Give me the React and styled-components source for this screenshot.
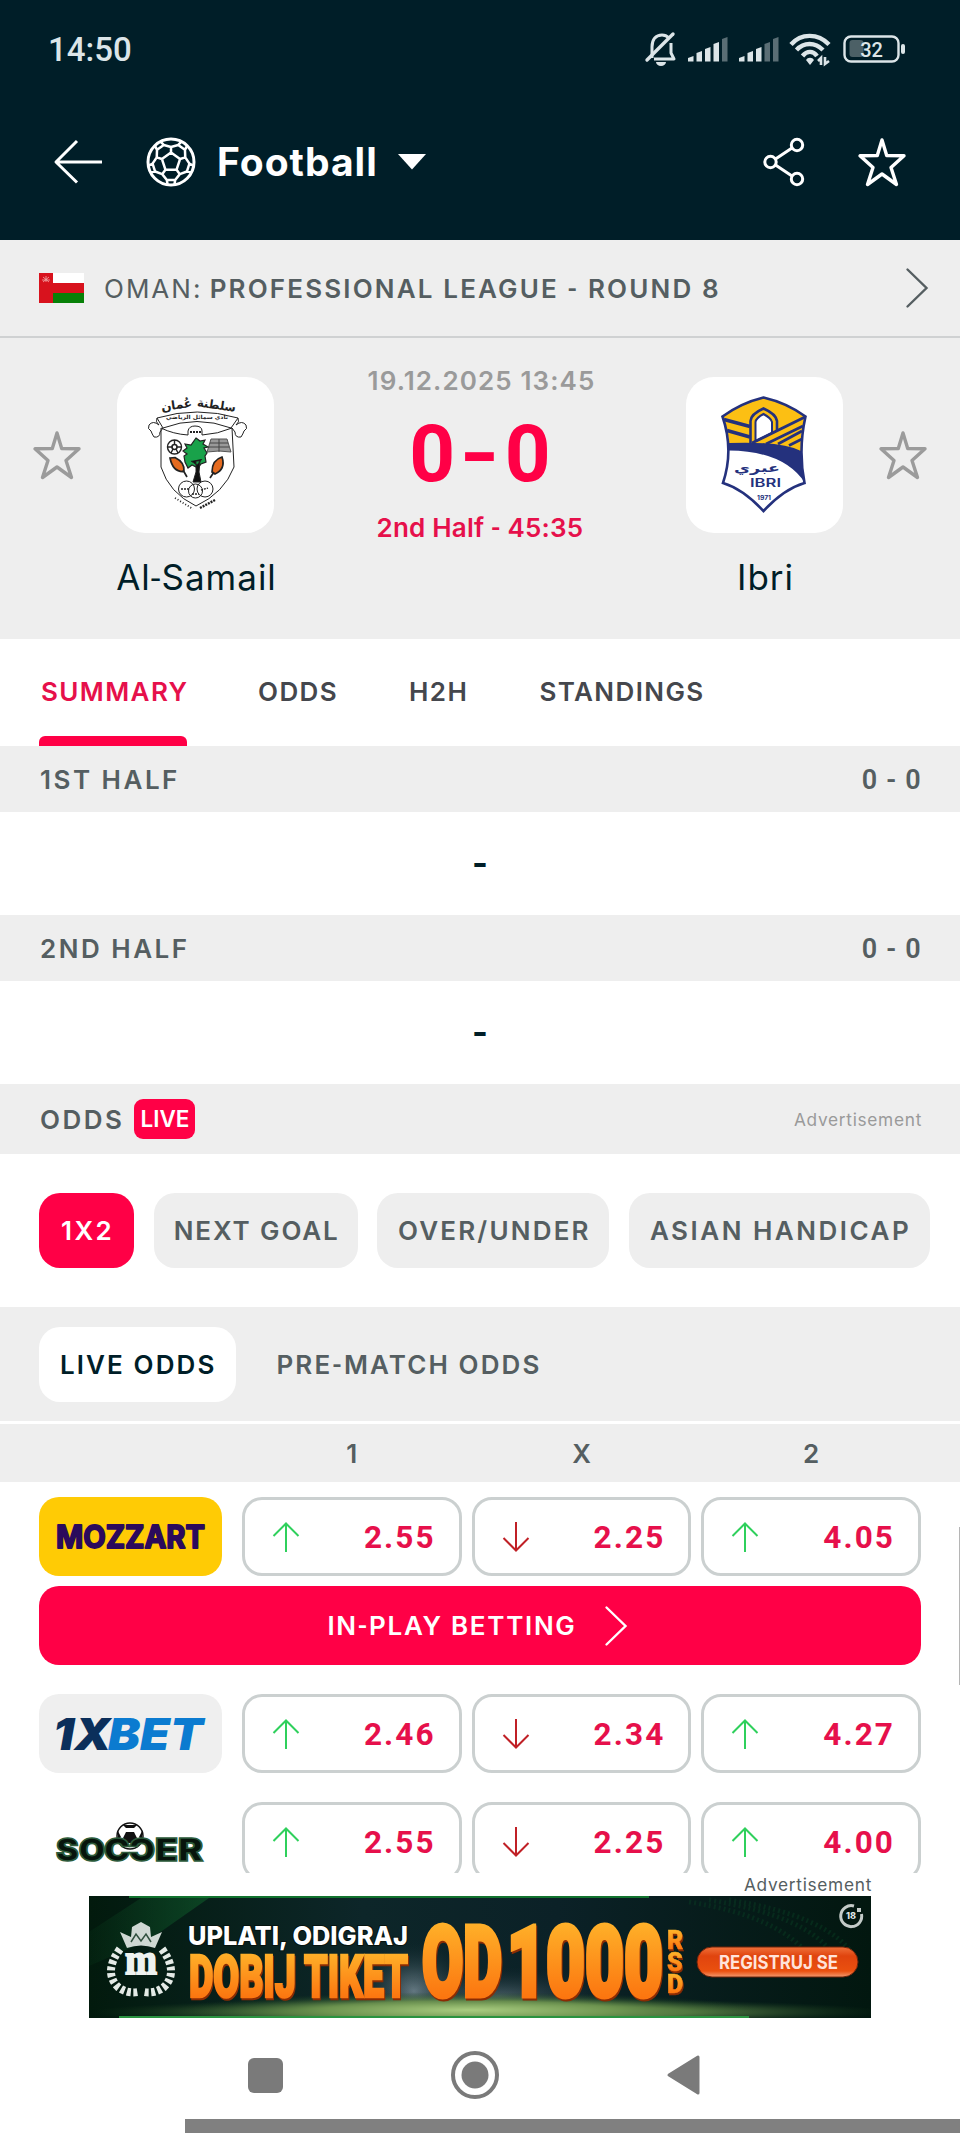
import React from "react";
import styled, { createGlobalStyle } from "styled-components";

const pills = [
  { label: "1X2", width: 95, tracking: 2.3, active: true },
  { label: "NEXT GOAL", width: 204, tracking: 1.9 },
  { label: "OVER/UNDER", width: 232, tracking: 2.2 },
  { label: "ASIAN HANDICAP", width: 301, tracking: 2.5 },
];

const tabs = [
  { label: "SUMMARY", width: 148, active: true },
  { label: "ODDS", width: 82 },
  { label: "H2H", width: 61 },
  { label: "STANDINGS", width: 168 },
];

const mozzartOdds = [
  { value: "2.55", up: true },
  { value: "2.25", up: false },
  { value: "4.05", up: true },
];
const xbetOdds = [
  { value: "2.46", up: true },
  { value: "2.34", up: false },
  { value: "4.27", up: true },
];
const soccerOdds = [
  { value: "2.55", up: true },
  { value: "2.25", up: false },
  { value: "4.00", up: true },
];

function App() {
  return (
    <Screen>
      <GlobalStyle />
      <StatusBar />
      <Header />
      <LeagueBar>
        <OmanFlag />
        <LeagueName>
          OMAN:{" "}
          <b>
            PROFESSIONAL LEAGUE <Hyphen>-</Hyphen> ROUND 8
          </b>
        </LeagueName>
        <Chevron color="#555e61" />
      </LeagueBar>
      <MatchHeader />
      <Tabs>
        {tabs.map((tab) => (
          <Tab key={tab.label} $width={tab.width} $active={tab.active}>
            <span>{tab.label}</span>
            <TabLine $active={tab.active} />
          </Tab>
        ))}
      </Tabs>
      <Half title="1ST HALF" score="0 - 0" />
      <Half title="2ND HALF" score="0 - 0" />
      <OddsHead>
        <SectionTitle>ODDS</SectionTitle>
        <LiveBadge>LIVE</LiveBadge>
        <AdNote $color="#9a9a9a">Advertisement</AdNote>
      </OddsHead>
      <PillRow>
        {pills.map((pill) => (
          <Pill key={pill.label} $width={pill.width} $tracking={pill.tracking} $active={pill.active}>
            {pill.label}
          </Pill>
        ))}
      </PillRow>
      <OddsTabs>
        <OddsTab $active>LIVE ODDS</OddsTab>
        <OddsTab>
          PRE<Hyphen>-</Hyphen>MATCH ODDS
        </OddsTab>
      </OddsTabs>
      <ColumnHead>
        <span />
        <span>1</span>
        <span>X</span>
        <span>2</span>
      </ColumnHead>
      <OddsList>
        <OddsRow logo={<MozzartLogo />} color="#ffcb05" odds={mozzartOdds} />
        <InPlayButton>
          <span>
            IN<Hyphen>-</Hyphen>PLAY BETTING
          </span>
          <Chevron color="#fff" />
        </InPlayButton>
        <OddsRow logo={<XbetLogo />} color="#efefef" odds={xbetOdds} />
        <OddsRow logo={<SoccerLogo />} color="#fff" odds={soccerOdds} />
        <ScrollThumb />
      </OddsList>
      <AdBlock>
        <AdNote $color="#555e61">Advertisement</AdNote>
        <AdBanner />
      </AdBlock>
      <NavBar />
      <BottomStrip />
    </Screen>
  );
}

const StatusBar = () => (
  <StatusRow>
    <Clock>14:50</Clock>
    <StatusIcons>
      <svg width="32" height="36" viewBox="0 0 32 36" fill="none" stroke="#dce5e8" strokeWidth="3">
        <path d="M7 27 V16 C7 8 11 4 17 4 C20 4 22 5 24 7 M26 12 V22 L29 28 H9" strokeLinejoin="round" />
        <path d="M2 29 L28 3" strokeWidth="3.4" strokeLinecap="round" />
        <path d="M11 31 a5 4 0 0 0 10 0 z" fill="#dce5e8" stroke="none" />
      </svg>
      <Signal level={4} />
      <Signal level={3} />
      <svg width="42" height="34" viewBox="0 0 42 34" fill="none" stroke="#dce5e8" strokeWidth="4.4">
        <path d="M2 12.500 C12 1 29 1 40 12.500" />
        <path d="M7.500 18 C15 10 26 10 34 18" />
        <path d="M13.500 24 C18 18.500 24 18.500 28 24" />
        <path d="M17 28 a4.500 4 0 0 1 8 0 L21 33 z" fill="#dce5e8" stroke="none" />
        <path d="M32 33 V26 L29 29 M36 25 V32 L40 29" strokeWidth="2.600" />
      </svg>
      <svg width="63" height="28" viewBox="0 0 63 28">
        <rect x="1.500" y="1.500" width="54" height="25" rx="6.500" fill="none" stroke="#dce5e8" strokeWidth="2.400" />
        <rect x="6.500" y="5" width="14" height="17" rx="3" fill="#4c6066" />
        <rect x="58" y="9" width="4" height="10" rx="2" fill="#dce5e8" />
        <text x="28.500" y="21.500" textAnchor="middle" fontFamily="Roboto, sans-serif" fontSize="20" fontWeight="500" fill="#dce5e8">
          32
        </text>
      </svg>
    </StatusIcons>
  </StatusRow>
);

const Signal = ({ level }) => (
  <svg width="39" height="26" viewBox="0 0 39 26">
    {[6, 11, 15, 20, 25].map((h, i) => (
      <path
        key={h}
        d={`M${i * 8.5} ${26 - h + 2} l5.500 -2 V25.500 h-5.500 z`}
        fill={i < level ? "#dce5e8" : "#5a6e75"}
      />
    ))}
  </svg>
);

const Header = () => (
  <HeaderRow>
    <BackIcon width="49" height="46" viewBox="0 0 49 46" fill="none" stroke="#fff" strokeWidth="3">
      <path d="M48 23 H2 M23 2 L2 23 L23 43.500" strokeLinejoin="round" />
    </BackIcon>
    <FootballIcon />
    <SportName>Football</SportName>
    <svg width="28" height="16" viewBox="0 0 28 16">
      <path d="M0 0 H28 L14 15.500 z" fill="#fff" />
    </svg>
    <HeaderActions>
      <svg width="42" height="50" viewBox="0 0 42 50" fill="none" stroke="#fff" strokeWidth="3">
        <circle cx="34" cy="8" r="5.700" />
        <circle cx="7.500" cy="25" r="5.700" />
        <circle cx="34" cy="42" r="5.700" />
        <path d="M12.500 22 L29 11 M12.500 28 L29 39" />
      </svg>
      <Star color="#fff" />
    </HeaderActions>
  </HeaderRow>
);

const polar = (radius, deg) => {
  const rad = ((deg - 90) * Math.PI) / 180;
  return `${(radius * Math.cos(rad)).toFixed(2)} ${(radius * Math.sin(rad)).toFixed(2)}`;
};

// one fifth of the ball: pentagon side, spoke, outer patch and the seam to the next patch
const ballSeams = [0, 72, 144, 216, 288]
  .map(
    (a) =>
      `M${polar(9.5, a)} L${polar(9.5, a + 72)} M${polar(9.5, a)} L${polar(15, a)} ` +
      `M${polar(22.5, a - 27)} L${polar(18.5, a - 23)} L${polar(15, a)} L${polar(18.5, a + 23)} L${polar(22.5, a + 27)} ` +
      `M${polar(18.5, a + 23)} L${polar(18.5, a + 49)}`
  )
  .join(" ");

const FootballIcon = () => (
  <svg width="50" height="50" viewBox="-25 -25 50 50" fill="none" stroke="#fff" strokeWidth="2.500">
    <circle r="23" strokeWidth="3" />
    <path d={ballSeams} strokeLinejoin="round" />
  </svg>
);

const Star = ({ color }) => (
  <svg width="48" height="49" viewBox="0 0 48 49" fill="none" stroke={color} strokeWidth="3.400">
    <path
      d="M24 2 L28.700 17.500 L46 17.800 L33 29.500 L38.500 46.500 L24 36 L9.500 46.500 L15 29.500 L2 17.800 L19.300 17.500 z"
      strokeLinejoin="round"
    />
  </svg>
);

const Chevron = ({ color }) => (
  <svg width="22" height="40" viewBox="0 0 22 40" fill="none" stroke={color} strokeWidth="2.400">
    <path d="M1.500 1.500 L20.500 20 L1.500 38.500" strokeLinecap="round" />
  </svg>
);

const OmanFlag = () => (
  <svg width="45" height="30" viewBox="0 0 45 30">
    <rect width="45" height="10" fill="#fff" />
    <rect y="10" width="45" height="10" fill="#d8121d" />
    <rect y="20" width="45" height="10" fill="#078007" />
    <rect width="14" height="30" fill="#d8121d" />
    <path d="M4 4 L10 9 M10 4 L4 9 M7 3 V9 M3 7 H11" stroke="#f3a9a9" strokeWidth="0.800" />
  </svg>
);

const MatchHeader = () => (
  <Match>
    <StarSlot>
      <Star color="#9b9b9b" />
    </StarSlot>
    <Team>
      <Crest>
        <SamailCrest />
      </Crest>
      <TeamName>
        Al<Hyphen>-</Hyphen>Samail
      </TeamName>
    </Team>
    <ScoreBlock>
      <MatchDate>19.12.2025 13:45</MatchDate>
      <Score>
        <span>0</span>
        <Dash>-</Dash>
        <span>0</span>
      </Score>
      <MatchTime>
        2nd Half <Hyphen>-</Hyphen> 45:35
      </MatchTime>
    </ScoreBlock>
    <Team>
      <Crest>
        <IbriCrest />
      </Crest>
      <TeamName>Ibri</TeamName>
    </Team>
    <StarSlot>
      <Star color="#9b9b9b" />
    </StarSlot>
  </Match>
);

const SamailCrest = () => (
  <svg width="156" height="156" viewBox="0 0 156 156" fill="none" stroke="#222" strokeWidth="1">
    <g fill="#222" stroke="none" fontFamily="DejaVu Sans, sans-serif">
      <text x="99" y="32" fontSize="12" textAnchor="middle" textLength="39" lengthAdjust="spacingAndGlyphs" transform="rotate(8 99 32)">
        سلطنة
      </text>
      <text x="60" y="32" fontSize="12" textAnchor="middle" textLength="31" lengthAdjust="spacingAndGlyphs" transform="rotate(-8 60 32)">
        عُمان
      </text>
      <text x="80" y="42" fontSize="5.500" textAnchor="middle" textLength="62" lengthAdjust="spacingAndGlyphs">
        نادي سمائل الرياضي
      </text>
    </g>
    <path d="M40 41 Q80 29 121 41 L114 51 Q80 38 46 51 z" />
    <path d="M40 41 q-2 4 2 7 q-6 -5 -10 0 q-2 4 2 6 q1 3 3 6 q6 1 6 -5 l3 -4" />
    <path d="M121 41 q2 4 -2 7 q6 -5 10 0 q2 4 -2 6 q-1 3 -3 6 q-6 1 -6 -5 l-3 -4" />
    <path d="M44 51 Q56 57 71 58 V54 Q72 49 78 49 Q85 49 85 54 V58 Q101 57 115 51" />
    <path d="M44 51 L44 90 Q52 116 79 129 Q107 116 117 90 L115 51" />
    <path d="M73 55 h11" strokeWidth="2" strokeDasharray="2 1" />
    <circle cx="57.500" cy="70" r="7" strokeWidth="1.400" />
    <circle cx="57.500" cy="70" r="2.500" strokeWidth="1.600" />
    <path d="M57.500 63 v4 M51 70 h4 M60 70 h4 M54 76 l2 -4 M61 76 l-2 -4" strokeWidth="1.400" />
    <path d="M94 62 H110 L114 75 L102 74 L90 75 z" fill="#999" stroke="#555" />
    <path d="M102 62 V75 M93 66 H111 M92 70 H112" stroke="#444" />
    <path
      d="M79 61 l4 3 5 -1 -2 4 5 3 -4 1 3 5 -2 3 1 6 -5 2 -3 4 -6 -3 -4 3 -3 -6 -1 -6 3 -2 -4 -3 4 -3 -2 -4 6 1 z"
      fill="#19a24a"
      strokeWidth="1.200"
    />
    <path d="M79 84 h4 l-1 11 2 10 h-8 l3 -10 z M74 84 l6 4 5 -6" fill="#111" />
    <path d="M53 81 l5 -.5 q10 5 9 14 q-11 1 -14 -13.500 z M66 93 l4 7" fill="#e56b20" strokeWidth="1.700" />
    <path d="M105 80 q-10 3 -10 15 l3 2 q11 -5 7 -17 z M97 95 l-4 6" fill="#e56b20" strokeWidth="1.700" />
    <circle cx="69.500" cy="112" r="8" />
    <circle cx="78.500" cy="114" r="7" />
    <circle cx="88" cy="112" r="8" />
    <path d="M64 112 h8 M75 117 h7 M84 113 l7 -2" strokeWidth="1.300" strokeDasharray="2 1" />
    <path d="M58 121 l18 11" strokeWidth="1.800" strokeDasharray="1 2" />
    <path d="M83 131 l15 -8" strokeWidth="2.400" strokeDasharray="2 1" />
  </svg>
);

const IbriCrest = () => (
  <svg width="156" height="156" viewBox="0 0 156 156">
    <path
      d="M77.500 20.500 Q101 26 119.500 39.500 Q112 73 118.500 106 Q98 112 77.500 134 Q57 112 37 106 Q48 73 36.500 39.500 Q55 26 77.500 20.500 z"
      fill="#fff"
    />
    <path d="M77.500 20.500 Q101 26 119.500 39.500 Q114 55 115 74 L43 70 Q43 54 36.500 39.500 Q55 26 77.500 20.500 z" fill="#fcbf13" />
    <path d="M43 66 Q95 64 115 74 Q115 90 119 106 Q98 74 43 73.500 z" fill="#24317d" />
    <g fill="none" stroke="#24317d" strokeWidth="2.600">
      <path d="M38 42.500 L64 49.500 M41 53.500 L64 60" strokeWidth="3.400" />
      <path d="M64.500 66 V44 Q65 37 77.500 31.500 Q90 37 91 44 V54" fill="#fcbf13" />
      <path d="M69.500 65 V45 Q70 41 77.500 37 Q85 41 86 45 V56 L70 64" fill="#fff" strokeWidth="2" />
      <path d="M119 40 L66 66 M117 49 L80 67 M116 54 L92 67 M116 62 L103 68.500" strokeWidth="2.800" />
      <path
        d="M77.500 20.500 Q101 26 119.500 39.500 Q112 73 118.500 106 Q98 112 77.500 134 Q57 112 37 106 Q48 73 36.500 39.500 Q55 26 77.500 20.500 z"
      />
    </g>
    <g fill="#24317d" fontFamily="DejaVu Sans, sans-serif">
      <text x="71" y="95" textAnchor="middle" fontSize="12" textLength="46" lengthAdjust="spacingAndGlyphs">
        عبري
      </text>
      <text x="64" y="110" fontFamily="Inter, sans-serif" fontWeight="600" fontSize="12" textLength="31" lengthAdjust="spacingAndGlyphs">
        IBRI
      </text>
      <text x="71" y="123" fontFamily="Inter, sans-serif" fontWeight="700" fontSize="6" textLength="14" lengthAdjust="spacingAndGlyphs">
        1971
      </text>
    </g>
  </svg>
);

const Half = ({ title, score }) => (
  <>
    <SectionHead>
      <SectionTitle>{title}</SectionTitle>
      <HalfScore>{score}</HalfScore>
    </SectionHead>
    <HalfBody>-</HalfBody>
  </>
);

const OddsRow = ({ logo, color, odds }) => (
  <OddsGrid>
    <LogoBox $color={color}>{logo}</LogoBox>
    {odds.map((odd, index) => (
      <OddBox key={index}>
        <Arrow up={odd.up} />
        <span>{odd.value}</span>
      </OddBox>
    ))}
  </OddsGrid>
);

const Arrow = ({ up }) => (
  <svg width="28" height="30" viewBox="0 0 28 30" fill="none" stroke={up ? "#2fd05c" : "#c02026"} strokeWidth="2">
    <path d={up ? "M14 30 V2 M1.500 14 L14 1.500 L26.500 14" : "M14 0 V28 M1.500 16 L14 28.500 L26.500 16"} />
  </svg>
);

const MozzartLogo = () => (
  <svg width="151" height="32" viewBox="0 0 151 32">
    <text x="1" y="27" fontFamily="Inter, sans-serif" fontWeight="700" fontSize="31" fill="#2b0a5c" stroke="#2b0a5c" strokeWidth="1.800" strokeLinejoin="round" textLength="149" lengthAdjust="spacingAndGlyphs">
      MOZZART
    </text>
  </svg>
);

const XbetLogo = () => (
  <svg width="151" height="36" viewBox="0 0 151 36">
    <g fontFamily="Inter, sans-serif" fontWeight="900" fontStyle="italic" fontSize="44">
      <text x="-2" y="33.500" fill="#0b2f5b" textLength="58" lengthAdjust="spacingAndGlyphs">
        1X
      </text>
      <text x="53" y="33.500" fill="#0b7bd0" textLength="95" lengthAdjust="spacingAndGlyphs">
        BET
      </text>
    </g>
  </svg>
);

const SoccerLogo = () => (
  <svg width="151" height="42" viewBox="0 0 151 42">
    <circle cx="75" cy="15" r="13" fill="#fff" stroke="#111" strokeWidth="1.500" />
    <path d="M71 11 h8 l3 6 -4 5 h-6 l-4 -5 z M68 4 h14 l-3 3 h-8 z M63 10 l3 6 -3 4 z M87 10 l-3 6 3 4 z" fill="#111" />
    <g fontFamily="Inter, sans-serif" fontWeight="900" fontSize="31" fill="#07140c" stroke="#2c5b3b" strokeWidth="1.600">
      <text x="1" y="39.500" textLength="49" lengthAdjust="spacingAndGlyphs">
        SO
      </text>
      <text x="49" y="39.500" textLength="26" lengthAdjust="spacingAndGlyphs">
        C
      </text>
      <text x="-100" y="39.500" textLength="26" lengthAdjust="spacingAndGlyphs" transform="scale(-1 1)">
        C
      </text>
      <text x="100" y="39.500" textLength="48" lengthAdjust="spacingAndGlyphs">
        ER
      </text>
    </g>
  </svg>
);

const AdBanner = () => (
  <svg width="782" height="122" viewBox="0 0 782 122">
    <defs>
      <linearGradient id="night" x1="0" x2="1">
        <stop offset="0" stopColor="#021a0d" />
        <stop offset="0.350" stopColor="#0d2629" />
        <stop offset="0.600" stopColor="#0b2127" />
        <stop offset="1" stopColor="#02170f" />
      </linearGradient>
      <radialGradient id="grass">
        <stop offset="0" stopColor="#a9cc80" />
        <stop offset="0.500" stopColor="#6f9650" stopOpacity="0.850" />
        <stop offset="1" stopColor="#173f1c" stopOpacity="0" />
      </radialGradient>
      <radialGradient id="glow">
        <stop offset="0" stopColor="#8295a0" stopOpacity="0.800" />
        <stop offset="1" stopColor="#12292f" stopOpacity="0" />
      </radialGradient>
      <linearGradient id="gold" x1="0" y1="0" x2="0" y2="1">
        <stop offset="0.100" stopColor="#ffb62b" />
        <stop offset="0.900" stopColor="#fb6d0c" />
      </linearGradient>
      <linearGradient id="beam" x1="0" x2="1">
        <stop offset="0" stopColor="#0b4a22" stopOpacity="0.200" />
        <stop offset="1" stopColor="#0e5428" />
      </linearGradient>
      <linearGradient id="button" x1="0" y1="0" x2="0" y2="1">
        <stop offset="0" stopColor="#f0713a" />
        <stop offset="0.300" stopColor="#e0440e" />
        <stop offset="0.800" stopColor="#ea500f" />
        <stop offset="1" stopColor="#f49a70" />
      </linearGradient>
      <clipPath id="bannerClip">
        <rect width="782" height="122" />
      </clipPath>
    </defs>
    <g clipPath="url(#bannerClip)">
      <rect width="782" height="122" fill="url(#night)" />
      <path d="M0 36 L52 2 H120 L60 44 L0 70 z" fill="url(#beam)" opacity="0.700" />
      <ellipse cx="325" cy="95" rx="60" ry="50" fill="url(#glow)" />
      <ellipse cx="410" cy="100" rx="120" ry="30" fill="url(#glow)" opacity="0.600" />
      <ellipse cx="400" cy="116" rx="400" ry="14" fill="url(#grass)" />
      <ellipse cx="380" cy="114" rx="290" ry="18" fill="url(#grass)" />
      <path d="M40 1 H560" stroke="#12732f" strokeWidth="2" />
      <path d="M30 121 H660" stroke="#2a9340" strokeWidth="2" />
      <path d="M600 6 Q690 20 720 60 M620 4 Q720 20 745 60 M640 4 Q740 20 765 60" stroke="#0a4425" strokeWidth="5" strokeDasharray="2 3" fill="none" opacity="0.400" />
    </g>

    <g fill="#eef2ef">
      <path d="M38 52 L31 36 L42 41 L43 31 L52 26 L61 31 L62 41 L73 36 L66 52 Q52 47 38 52 z" fill="#cfd8d3" />
      <path d="M42 46 l5 -8 5 7 5 -7 5 8" fill="none" stroke="#31503f" strokeWidth="1.500" />
      <text x="36" y="78" fontFamily="Liberation Serif, serif" fontWeight="900" fontSize="44" stroke="#eef2ef" strokeWidth="2" textLength="32" lengthAdjust="spacingAndGlyphs">
        m
      </text>
    </g>
    <path d="M31 53 Q14 76 29 91 Q38 98 49 96" fill="none" stroke="#e4eae6" strokeWidth="8" strokeDasharray="4 2.500" />
    <path d="M73 53 Q90 76 75 91 Q66 98 55 96" fill="none" stroke="#e4eae6" strokeWidth="8" strokeDasharray="4 2.500" />

    <text x="99" y="49" fontFamily="Inter, sans-serif" fontWeight="800" fontSize="26" fill="#fff" stroke="#06130f" strokeWidth="2" paintOrder="stroke" textLength="220" lengthAdjust="spacingAndGlyphs">
      UPLATI, ODIGRAJ
    </text>
    <GoldText>
      <text x="100" y="101" fontSize="59" strokeWidth="2.600" textLength="219" lengthAdjust="spacingAndGlyphs">
        DOBIJ TIKET
      </text>
      <text x="333" y="100" fontSize="99" strokeWidth="5" textLength="80" lengthAdjust="spacingAndGlyphs">
        OD
      </text>
      <text x="418" y="100" fontSize="99" strokeWidth="5" textLength="156" lengthAdjust="spacingAndGlyphs">
        1000
      </text>
      <g fontSize="25" strokeWidth="0.500">
        <text x="578" y="53">R</text>
        <text x="578" y="75">S</text>
        <text x="578" y="97">D</text>
      </g>
    </GoldText>
    <rect x="608" y="51" width="161" height="30" rx="15" fill="url(#button)" stroke="#6f2209" strokeWidth="1" />
    <text x="630" y="72.500" fontFamily="Inter, sans-serif" fontWeight="700" fontSize="18.500" fill="#ffe3da" textLength="119" lengthAdjust="spacingAndGlyphs">
      REGISTRUJ SE
    </text>
    <path d="M765 10 A10.500 10.500 0 1 0 772.500 18" fill="none" stroke="#c4cbc8" strokeWidth="3" />
    <path d="M768 12 h4 v4 h-4 z" fill="#c4cbc8" />
    <text x="757" y="23" fontFamily="Inter, sans-serif" fontWeight="800" fontSize="9" fill="#dfe4e2">
      18
    </text>
  </svg>
);

const NavBar = () => (
  <NavRow>
    <svg width="35" height="35" viewBox="0 0 35 35">
      <rect width="35" height="35" rx="6" fill="#7a7a7a" />
    </svg>
    <svg width="48" height="48" viewBox="0 0 48 48">
      <circle cx="24" cy="24" r="22" fill="none" stroke="#7a7a7a" strokeWidth="4" />
      <circle cx="24" cy="24" r="13.500" fill="#7a7a7a" />
    </svg>
    <svg width="33" height="40" viewBox="0 0 33 40">
      <path d="M2 20 L31 2 V38 z" fill="#7a7a7a" stroke="#7a7a7a" strokeWidth="3" strokeLinejoin="round" />
    </svg>
  </NavRow>
);

export default App;

// Styled Components
const GlobalStyle = createGlobalStyle`
  body {
    margin: 0;
    background: #ffffff;
  }

  * {
    box-sizing: border-box;
  }

  svg {
    display: block;
    flex-shrink: 0;
    overflow: visible;
  }
`;

const Screen = styled.div`
  width: 960px;
  height: 2133px;
  overflow: hidden;
  background: #ffffff;
  font-family: Inter, "Liberation Sans", sans-serif;
  font-weight: 600;
  font-size: 26px;
  color: #555e61;
`;

// Roboto has a shorter hyphen than Inter
const Hyphen = styled.span`
  font-family: Roboto, sans-serif;
  line-height: 1;
`;

const StatusRow = styled.div`
  display: flex;
  align-items: center;
  justify-content: space-between;
  height: 98px;
  padding: 0 54px 0 48px;
  background: #001e28;
`;

const Clock = styled.div`
  font-family: Roboto, sans-serif;
  font-weight: 500;
  font-size: 33px;
  color: #dce5e8;
`;

const StatusIcons = styled.div`
  display: flex;
  align-items: center;
  gap: 11.6px;
`;

const HeaderRow = styled.div`
  display: flex;
  align-items: center;
  height: 142px;
  padding: 0 54px 14px 54px;
  background: #001e28;
`;

const BackIcon = styled.svg`
  margin-right: 43px;
`;

const SportName = styled.div`
  width: 160px;
  margin: -2px 21px 0;
  font-size: 39px;
  font-weight: 700;
  letter-spacing: 1px;
  white-space: nowrap;
  color: #ffffff;
`;

const HeaderActions = styled.div`
  display: flex;
  align-items: center;
  gap: 53px;
  margin-left: auto;
`;

const LeagueBar = styled.div`
  display: flex;
  align-items: center;
  height: 98px;
  padding: 0 32px 0 39px;
  border-bottom: 2px solid #cfd1d2;
  background: #eeeeee;
`;

const LeagueName = styled.div`
  flex: 1;
  margin-left: 20px;
  font-weight: 400;
  letter-spacing: 2px;
  white-space: nowrap;

  b {
    margin-left: -2px;
    font-weight: 600;
    letter-spacing: 2.15px;
  }
`;

const Match = styled.div`
  display: grid;
  grid-template-columns: 48px 157px 340px 157px 48px;
  column-gap: 36px;
  justify-content: center;
  height: 301px;
  padding-top: 39px;
  background: #eeeeee;
`;

const StarSlot = styled.div`
  padding-top: 54px;
`;

const Team = styled.div`
  display: flex;
  flex-direction: column;
  align-items: center;
`;

const Crest = styled.div`
  width: 157px;
  height: 156px;
  border-radius: 28px;
  background: #ffffff;
`;

const TeamName = styled.div`
  margin-top: 22px;
  padding-left: 2px;
  font-size: 35px;
  line-height: 44px;
  font-weight: 400;
  letter-spacing: 1px;
  white-space: nowrap;
  color: #001e28;
`;

const ScoreBlock = styled.div`
  display: flex;
  flex-direction: column;
  align-items: center;
  margin-top: -14px;
  white-space: nowrap;
`;

const MatchDate = styled.div`
  padding-left: 3px;
  line-height: 36px;
  letter-spacing: 1.1px;
  color: #9a9a9a;
`;

const Score = styled.div`
  display: flex;
  align-items: center;
  justify-content: center;
  gap: 9px;
  height: 111px;
  font-family: Roboto, sans-serif;
  font-weight: 700;
  font-size: 80px;
  line-height: 111px;
  color: #ff0046;
`;

const Dash = styled.span`
  transform: scaleX(1.3);
`;

const MatchTime = styled.div`
  line-height: 36px;
  letter-spacing: 0.2px;
  color: #e6104b;
`;

const Tabs = styled.div`
  display: flex;
  gap: 69px;
  height: 107px;
  padding-left: 39px;
`;

const Tab = styled.div`
  display: flex;
  flex-direction: column;
  width: ${(props) => props.$width}px;
  letter-spacing: 1.4px;
  white-space: nowrap;
  color: ${(props) => (props.$active ? "#e6104b" : "#45474d")};

  span {
    height: 97px;
    padding: 9px 0 0 2px;
    line-height: 88px;
    text-align: center;
  }
`;

const TabLine = styled.div`
  height: 10px;
  border-radius: 6px 6px 0 0;
  background: ${(props) => (props.$active ? "#ff0046" : "transparent")};
`;

const SectionHead = styled.div`
  display: flex;
  align-items: center;
  justify-content: space-between;
  height: 66px;
  padding: 0 38px 0 40px;
  background: #eeeeee;
`;

const SectionTitle = styled.div`
  letter-spacing: 2.5px;
`;

const HalfScore = styled.div`
  padding-top: 1px;
  font-family: Roboto, sans-serif;
  font-size: 27px;
  letter-spacing: 1.2px;
`;

const HalfBody = styled.div`
  height: 103px;
  line-height: 102px;
  text-align: center;
  font-size: 34px;
  font-weight: 700;
  color: #001e28;
`;

const OddsHead = styled.div`
  display: flex;
  align-items: center;
  height: 70px;
  padding: 0 38px 0 40px;
  background: #eeeeee;
`;

const LiveBadge = styled.div`
  width: 61px;
  height: 40px;
  margin-left: 10px;
  border-radius: 9px;
  background: #ff0046;
  color: #ffffff;
  font-size: 22.5px;
  line-height: 40px;
  text-align: center;
`;

const AdNote = styled.div`
  margin-left: auto;
  font-size: 17.3px;
  font-weight: 400;
  letter-spacing: 0.7px;
  color: ${(props) => props.$color};
`;

const PillRow = styled.div`
  display: flex;
  align-items: center;
  gap: 19.7px;
  height: 153px;
  padding-left: 39px;
`;

const Pill = styled.div`
  flex-shrink: 0;
  width: ${(props) => props.$width}px;
  height: 75px;
  padding-left: 2px;
  border-radius: 21px;
  background: ${(props) => (props.$active ? "#ff0046" : "#eeeeee")};
  color: ${(props) => (props.$active ? "#ffffff" : "#555e61")};
  line-height: 75px;
  text-align: center;
  letter-spacing: ${(props) => props.$tracking}px;
  white-space: nowrap;
`;

const OddsTabs = styled.div`
  display: flex;
  align-items: center;
  gap: 19px;
  height: 114px;
  padding-left: 39px;
  background: #eeeeee;
`;

const OddsTab = styled.div`
  padding: 0 20px 0 21px;
  height: 75px;
  border-radius: 21px;
  background: ${(props) => (props.$active ? "#ffffff" : "transparent")};
  color: ${(props) => (props.$active ? "#001e28" : "#555e61")};
  line-height: 75px;
  letter-spacing: 2.1px;
  white-space: nowrap;
`;

const ColumnHead = styled.div`
  display: grid;
  grid-template-columns: 193px 1fr 1fr 1fr;
  column-gap: 10px;
  align-items: center;
  height: 58px;
  margin-top: 3px;
  padding: 0 39px;
  background: #eeeeee;
  text-align: center;
`;

const OddsList = styled.div`
  position: relative;
  height: 391px;
  padding: 15px 39px 0;
  overflow: hidden;
`;

const OddsGrid = styled.div`
  display: grid;
  grid-template-columns: 193px 1fr 1fr 1fr;
  column-gap: 10px;
  height: 79px;
  margin-bottom: 29px;
`;

const LogoBox = styled.div`
  display: flex;
  align-items: center;
  justify-content: center;
  width: 183px;
  height: 79px;
  border-radius: 20px;
  background: ${(props) => props.$color};
`;

const OddBox = styled.div`
  display: flex;
  align-items: center;
  justify-content: space-between;
  height: 79px;
  padding: 0 23px 0 27px;
  border: 3px solid #cbd0d0;
  border-radius: 20px;
  font-family: Roboto, sans-serif;
  font-size: 31.5px;
  font-weight: 700;
  letter-spacing: 2.1px;
  color: #e6104b;

  span {
    padding-top: 1px;
  }
`;

const InPlayButton = styled.div`
  display: flex;
  align-items: center;
  justify-content: center;
  gap: 28px;
  height: 79px;
  margin: -19px 0 29px;
  padding-right: 6px;
  border-radius: 20px;
  background: #ff0046;
  color: #ffffff;
  letter-spacing: 1.7px;
`;

const ScrollThumb = styled.div`
  position: absolute;
  top: 45px;
  right: 0;
  width: 1px;
  height: 158px;
  background: #b5b5b5;
`;

const AdBlock = styled.div`
  display: flex;
  flex-direction: column;
  height: 144px;
  padding: 0 88px 0 89px;

  ${AdNote} {
    height: 23px;
    line-height: 23px;
  }
`;

const GoldText = styled.g`
  font-family: Roboto, sans-serif;
  font-weight: 900;
  fill: url(#gold);
  stroke: url(#gold);
  filter: drop-shadow(1px 2px 0 #8c2c03);
`;

const NavRow = styled.div`
  display: flex;
  align-items: center;
  height: 102px;
  padding: 14px 0 0 248px;
  gap: 168px;
`;

const BottomStrip = styled.div`
  height: 16px;
  margin-left: 185px;
  background: #808080;
`;
